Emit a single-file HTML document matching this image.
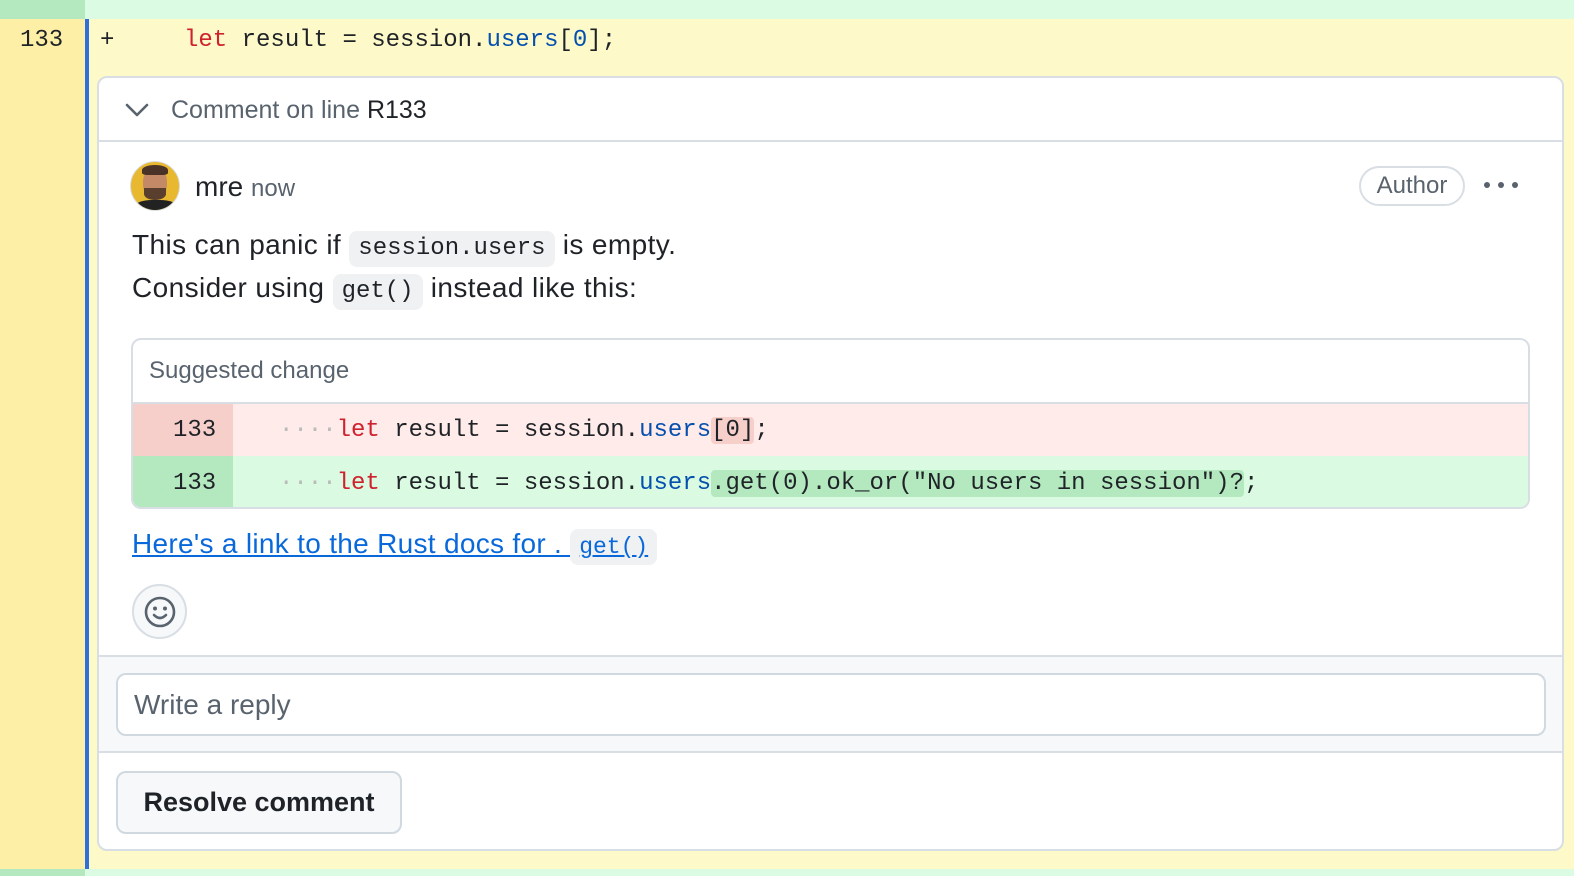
<!DOCTYPE html>
<html><head><meta charset="utf-8"><style>
*{box-sizing:border-box;margin:0;padding:0}
html,body{width:1574px;height:876px;overflow:hidden}
body{background:#fdf9c8;font-family:"Liberation Sans",sans-serif;position:relative;color:#1f2328}
.a{position:absolute}
.mono{font-family:"Liberation Mono",monospace;font-size:24px;white-space:pre}
.kw{color:#cf222e}.bl{color:#0550ae}
code{font-family:"Liberation Mono",monospace;font-size:24px;background:#eff1f3;border-radius:8px;padding:3px 9px;display:inline-block;line-height:30px;letter-spacing:0}
</style></head><body>
<div class="a" style="left:0;top:0;width:85px;height:19px;background:#b4e9c0"></div>
<div class="a" style="left:85px;top:0;right:0;height:19px;background:#dcfbe3"></div>
<div class="a" style="left:0;top:869px;width:85px;height:7px;background:#b4e9c0"></div>
<div class="a" style="left:85px;top:869px;right:0;height:7px;background:#dcfbe3"></div>
<div class="a" style="left:0;top:19px;width:85px;height:850px;background:#fdf0a6"></div>
<div class="a" style="left:85px;top:19px;width:4px;height:850px;background:#2f6fdc"></div>
<div class="a mono" style="left:20px;top:25px;line-height:32px">133</div>
<div class="a mono" style="left:100px;top:25px;line-height:32px">+</div>
<div class="a mono" style="left:184px;top:25px;line-height:32px"><span class="kw">let</span> result = session.<span class="bl">users</span>[<span class="bl">0</span>];</div>

<div class="a" style="left:97px;top:76px;width:1467px;height:775px;background:#fff;border:2px solid #d8dee4;border-radius:10px;overflow:hidden">
 <div class="a" style="left:0;top:0;right:0;height:64px;border-bottom:2px solid #d8dee4"></div>
 <svg class="a" style="left:24px;top:22px" width="28" height="20" viewBox="0 0 28 20"><path d="M4 5 L14 15 L24 5" fill="none" stroke="#59636e" stroke-width="2.6" stroke-linecap="round" stroke-linejoin="round"/></svg>
 <div class="a" style="left:72px;top:18px;font-size:25px;color:#59636e">Comment on line <span style="color:#1f2328">R133</span></div>

 <div class="a" style="left:31px;top:83px;width:50px;height:50px;border-radius:50%;background:#e8b830;border:1px solid #d8dee4;overflow:hidden">
  <div class="a" style="left:12px;top:6px;width:24px;height:30px;border-radius:45%;background:#c48a68"></div>
  <div class="a" style="left:11px;top:3px;width:26px;height:10px;border-radius:50% 50% 20% 20%;background:#4a3326"></div>
  <div class="a" style="left:13px;top:26px;width:22px;height:12px;border-radius:0 0 50% 50%;background:#5a3e2e"></div>
  <div class="a" style="left:4px;top:38px;width:42px;height:16px;border-radius:40% 40% 0 0;background:#222"></div>
 </div>
 <div class="a" style="left:96px;top:93px;font-size:28px">mre <span style="font-size:24px;color:#59636e">now</span></div>
 <div class="a" style="left:1260px;top:88px;width:106px;height:40px;border:2px solid #d8dee4;border-radius:20px;font-size:24px;color:#59636e;text-align:center;line-height:36px">Author</div>
 <div class="a" style="left:1385px;top:104px;width:34px;height:8px;display:flex;justify-content:space-between"><i style="width:6px;height:6px;border-radius:50%;background:#59636e"></i><i style="width:6px;height:6px;border-radius:50%;background:#59636e"></i><i style="width:6px;height:6px;border-radius:50%;background:#59636e"></i></div>

 <div class="a" style="left:33px;top:146px;font-size:28px;line-height:42px;letter-spacing:0.4px">This can panic if <code>session.users</code> is empty.<br>Consider using <code>get()</code> instead like this:</div>

 <div class="a" style="left:32px;top:260px;width:1399px;height:171px;border:2px solid #d8dee4;border-radius:10px;overflow:hidden">
  <div class="a" style="left:0;top:0;right:0;height:64px;border-bottom:2px solid #d8dee4;font-size:24px;color:#59636e;padding:17px 0 0 16px">Suggested change</div>
  <div class="a" style="left:0;top:64px;right:0;height:52px;background:#ffebe9"></div>
  <div class="a" style="left:0;top:64px;width:100px;height:52px;background:#f7cfca"></div>
  <div class="a" style="left:0;top:116px;right:0;height:53px;background:#dafbe1"></div>
  <div class="a" style="left:0;top:116px;width:100px;height:53px;background:#b4e9c0"></div>
  <div class="a mono" style="left:40px;top:77px">133</div>
  <div class="a mono" style="left:40px;top:130px">133</div>
  <div class="a mono" style="left:146px;top:77px"><span style="color:#bbb">····</span><span class="kw">let</span> result = session.<span class="bl">users</span><span style="background:#f7cfca;border-radius:4px">[0]</span>;</div>
  <div class="a mono" style="left:146px;top:130px"><span style="color:#bbb">····</span><span class="kw">let</span> result = session.<span class="bl">users</span><span style="background:#b4e9c0;border-radius:4px">.get(0).ok_or("No users in session")?</span>;</div>
 </div>

 <div class="a" style="left:33px;top:450px;font-size:28px;color:#0969da;text-decoration:underline;white-space:nowrap;letter-spacing:0.3px">Here's a link to the Rust docs for . <code style="color:#0969da;text-decoration:underline;font-size:23px">get()</code></div>
 <div class="a" style="left:33px;top:506px;width:55px;height:55px;border-radius:50%;border:2px solid #d8dee4;background:#f6f8fa"></div>
 <svg class="a" style="left:44px;top:517px" width="34" height="34" viewBox="0 0 34 34"><circle cx="17" cy="17" r="14" fill="none" stroke="#59636e" stroke-width="2.6"/><circle cx="12" cy="13.5" r="2" fill="#59636e"/><circle cx="22" cy="13.5" r="2" fill="#59636e"/><path d="M11 20 Q17 26 23 20" fill="none" stroke="#59636e" stroke-width="2.6" stroke-linecap="round"/></svg>

 <div class="a" style="left:0;top:577px;right:0;height:98px;background:#f6f8fa;border-top:2px solid #d8dee4;border-bottom:2px solid #d8dee4"></div>
 <div class="a" style="left:17px;top:595px;width:1430px;height:63px;background:#fff;border:2px solid #d1d9e0;border-radius:10px;font-size:28px;color:#59636e;padding:14px 0 0 16px">Write a reply</div>
 <div class="a" style="left:17px;top:693px;width:286px;height:63px;background:#f6f8fa;border:2px solid #d1d9e0;border-radius:10px;font-size:27px;font-weight:600;text-align:center;line-height:59px">Resolve comment</div>
</div>
</body></html>
